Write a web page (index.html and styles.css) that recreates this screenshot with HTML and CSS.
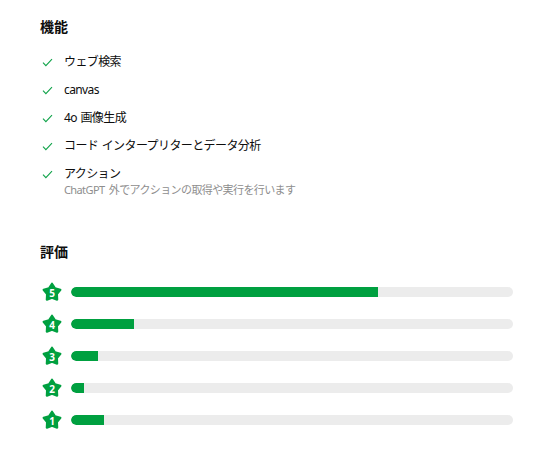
FILE: index.html
```html
<!DOCTYPE html>
<html lang="ja">
<head>
<meta charset="utf-8">
<link rel="stylesheet" href="styles.css">
</head>
<body>
<main class="page">
  <section class="features">
    <h2 class="title">機能</h2>
    <ul class="list">
      <li class="item"><svg class="check" viewBox="0 0 12 10"><path d="M1 5.2 L4.2 8.6 L11 1.2" /></svg><div class="text"><div class="label">ウェブ検索</div></div></li>
      <li class="item"><svg class="check" viewBox="0 0 12 10"><path d="M1 5.2 L4.2 8.6 L11 1.2" /></svg><div class="text"><div class="label">canvas</div></div></li>
      <li class="item"><svg class="check" viewBox="0 0 12 10"><path d="M1 5.2 L4.2 8.6 L11 1.2" /></svg><div class="text"><div class="label">4o 画像生成</div></div></li>
      <li class="item"><svg class="check" viewBox="0 0 12 10"><path d="M1 5.2 L4.2 8.6 L11 1.2" /></svg><div class="text"><div class="label">コード インタープリターとデータ分析</div></div></li>
      <li class="item"><svg class="check" viewBox="0 0 12 10"><path d="M1 5.2 L4.2 8.6 L11 1.2" /></svg><div class="text"><div class="label">アクション</div><div class="sub">ChatGPT 外でアクションの取得や実行を行います</div></div></li>
    </ul>
  </section>
  <section class="ratings">
    <h2 class="title">評価</h2>
    <div class="rows">
      <div class="row"><span class="star"><svg viewBox="0 0 24 24"><polygon points="12,3 15.29,8.07 21.13,9.63 17.33,14.33 17.64,20.37 12,18.2 6.36,20.37 6.67,14.33 2.87,9.63 8.71,8.07"/></svg><span class="num">5</span></span><div class="track"><div class="fill" style="width:69.4%"></div></div></div>
      <div class="row"><span class="star"><svg viewBox="0 0 24 24"><polygon points="12,3 15.29,8.07 21.13,9.63 17.33,14.33 17.64,20.37 12,18.2 6.36,20.37 6.67,14.33 2.87,9.63 8.71,8.07"/></svg><span class="num">4</span></span><div class="track"><div class="fill" style="width:14.3%"></div></div></div>
      <div class="row"><span class="star"><svg viewBox="0 0 24 24"><polygon points="12,3 15.29,8.07 21.13,9.63 17.33,14.33 17.64,20.37 12,18.2 6.36,20.37 6.67,14.33 2.87,9.63 8.71,8.07"/></svg><span class="num">3</span></span><div class="track"><div class="fill" style="width:6.1%"></div></div></div>
      <div class="row"><span class="star"><svg viewBox="0 0 24 24"><polygon points="12,3 15.29,8.07 21.13,9.63 17.33,14.33 17.64,20.37 12,18.2 6.36,20.37 6.67,14.33 2.87,9.63 8.71,8.07"/></svg><span class="num">2</span></span><div class="track"><div class="fill" style="width:2.9%"></div></div></div>
      <div class="row"><span class="star"><svg viewBox="0 0 24 24"><polygon points="12,3 15.29,8.07 21.13,9.63 17.33,14.33 17.64,20.37 12,18.2 6.36,20.37 6.67,14.33 2.87,9.63 8.71,8.07"/></svg><span class="num">1</span></span><div class="track"><div class="fill" style="width:7.5%"></div></div></div>
    </div>
  </section>
</main>
</body>
</html>
```
FILE: styles.css
```css
html, body {
  margin: 0;
  padding: 0;
  background: #ffffff;
}
body {
  font-family: "Noto Sans", "Noto Sans CJK JP", sans-serif;
  color: #0d0d0d;
}
.page {
  padding: 17px 31px 0 40px;
}
.title {
  margin: 0;
  font-size: 14px;
  font-weight: 700;
  line-height: 20px;
}
.list {
  list-style: none;
  margin: 15px 0 0 0;
  padding: 0;
  display: flex;
  flex-direction: column;
  gap: 9px;
}
.item {
  display: flex;
  align-items: flex-start;
  gap: 11px;
}
.check {
  width: 11px;
  height: 9px;
  margin: 6px 0 0 2px;
  flex: none;
}
.check path {
  fill: none;
  stroke: #10a34a;
  stroke-width: 1.2;
}
.label {
  font-size: 12px;
  line-height: 19px;
  letter-spacing: -0.6px;
  word-spacing: 1px;
}
.sub {
  font-size: 11px;
  line-height: 14px;
  color: #8e8e8e;
  letter-spacing: -0.6px;
  word-spacing: 2px;
}
.ratings {
  margin-top: 45px;
}
.rows {
  margin-top: 20px;
  display: flex;
  flex-direction: column;
  gap: 12px;
}
.row {
  display: flex;
  align-items: center;
  gap: 8px;
  height: 20px;
}
.star {
  position: relative;
  width: 22px;
  height: 22px;
  flex: none;
  margin-left: 1px;
}
.star svg {
  width: 22px;
  height: 22px;
  display: block;
}
.star polygon {
  fill: #00a040;
  stroke: #00a040;
  stroke-width: 2.4;
  stroke-linejoin: round;
}
.num {
  position: absolute;
  inset: 0;
  display: flex;
  align-items: center;
  justify-content: center;
  padding-top: 2px;
  font-family: "Noto Sans", sans-serif;
  font-size: 10px;
  line-height: 1;
  font-weight: 700;
  color: #ffffff;
}
.track {
  flex: 1;
  height: 10px;
  border-radius: 5px;
  background: #ececec;
  overflow: hidden;
}
.fill {
  height: 100%;
  background: #00a040;
  border-radius: 5px 0 0 5px;
}
```
